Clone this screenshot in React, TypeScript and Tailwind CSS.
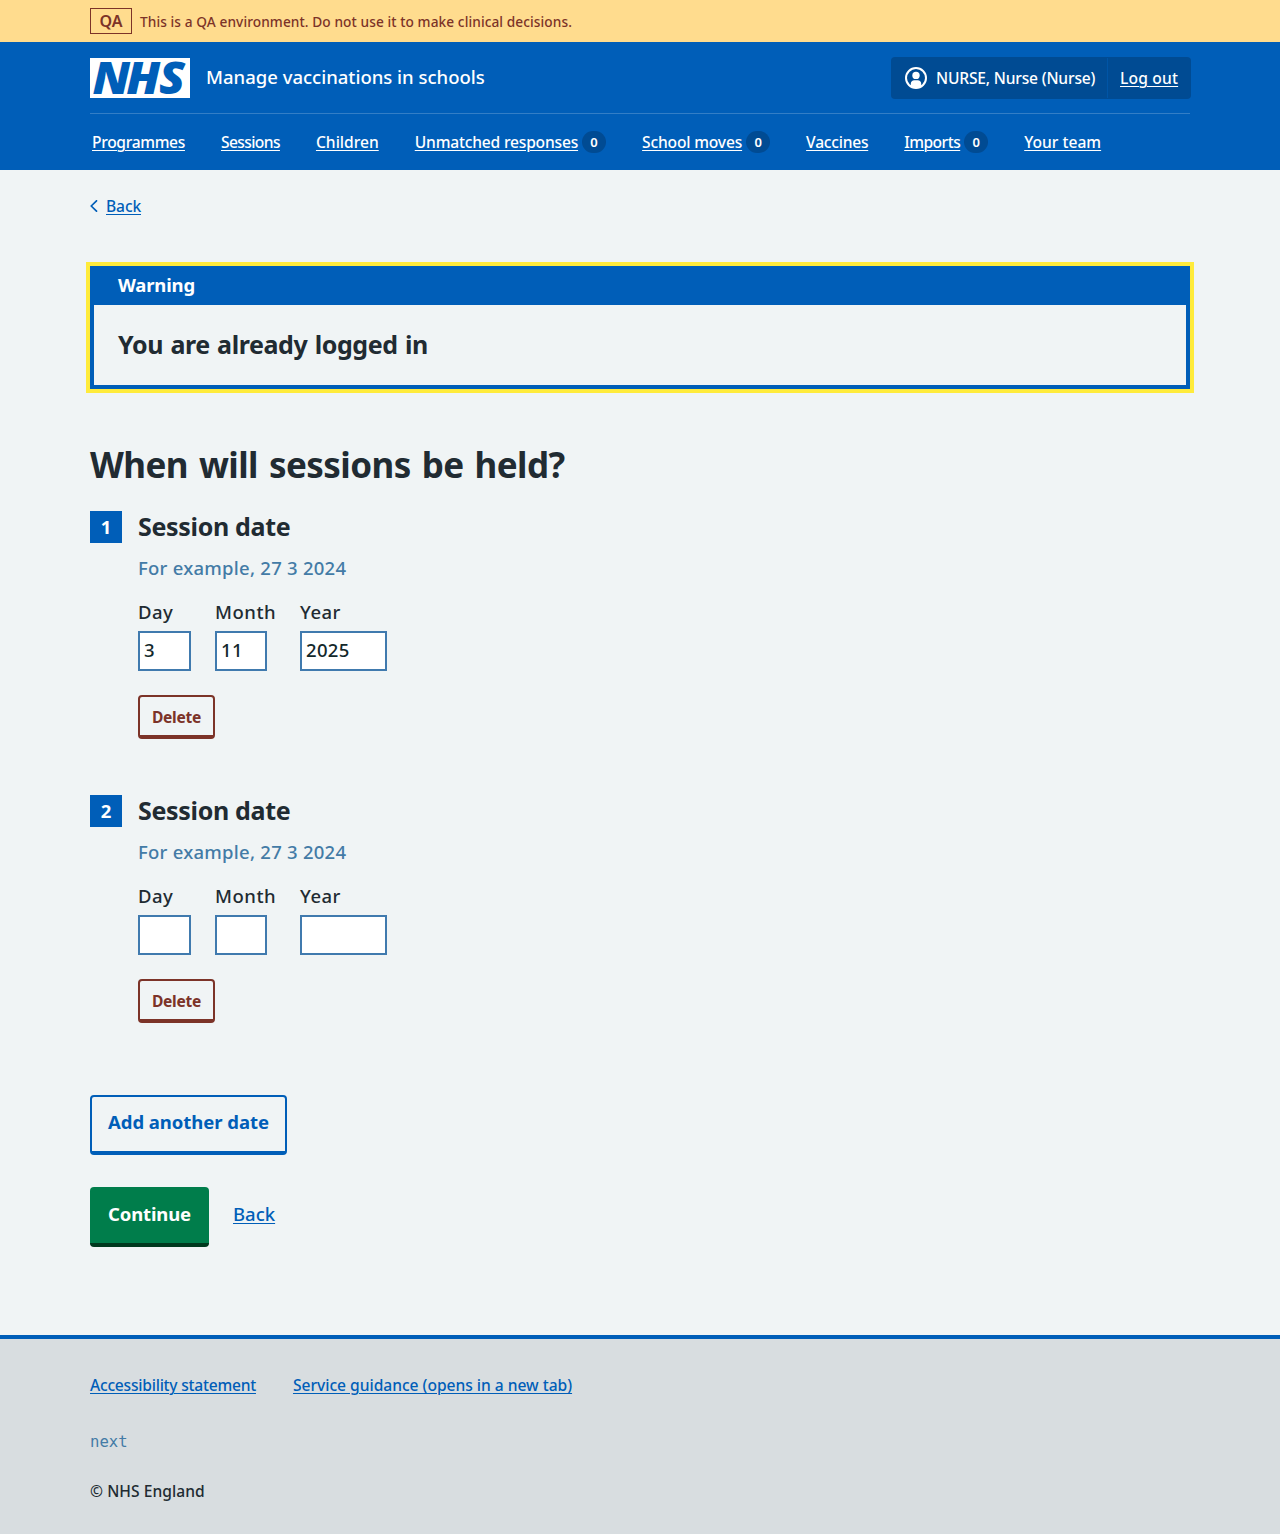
import { useState } from "react";

type NavItem = { label: string; tracking: string; count?: number };

const navItems: NavItem[] = [
  { label: "Programmes", tracking: "tracking-[-0.33px]" },
  { label: "Sessions", tracking: "tracking-[-0.6px]" },
  { label: "Children", tracking: "tracking-[0px]" },
  { label: "Unmatched responses", tracking: "tracking-[-0.19px]", count: 0 },
  { label: "School moves", tracking: "tracking-[-0.17px]", count: 0 },
  { label: "Vaccines", tracking: "tracking-[-0.24px]" },
  { label: "Imports", tracking: "tracking-[-0.52px]", count: 0 },
  { label: "Your team", tracking: "tracking-[0px]" },
];

const link = "underline decoration-1 underline-offset-2";

function Logo() {
  return (
    <svg width="100" height="40" viewBox="0 0 100 40" role="img" aria-label="NHS" className="shrink-0 overflow-visible">
      <rect width="100" height="40" fill="#fff" />
      <text
        transform="scale(1.07 1)"
        x="2.4 34 64.600"
        y="35.700"
        fill="#005eb8"
        fontFamily="Open Sans"
        fontSize="44.5"
        fontWeight="800"
        fontStyle="italic"
      >
        NHS
      </text>
    </svg>
  );
}

function AccountIcon() {
  return (
    <svg width="22" height="22" viewBox="0 0 22 22" aria-hidden="true" className="shrink-0">
      <circle cx="11" cy="11" r="10" fill="none" stroke="#fff" strokeWidth="2" />
      <circle cx="11" cy="8.4" r="3.7" fill="#fff" />
      <path d="M5.800 19.500v-2.700c0-2.200 1.500-3.600 3.600-3.600h3.200c2.100 0 3.600 1.400 3.600 3.600v2.700C14.800 20.500 13 21 11 21s-3.800-.5-5.200-1.500z" fill="#fff" />
    </svg>
  );
}

function Banner() {
  return (
    <div className="h-[42px] bg-[#ffdc8e] text-[#7c3328]">
      <div className="mx-auto flex h-full w-[1100px] items-center gap-2">
        <strong className="flex h-[26px] w-[42px] items-center justify-center border border-[#7c3328] text-base font-semibold leading-none">
          QA
        </strong>
        <span className="pt-px text-[13.7px] leading-5 tracking-[0.08px]">
          This is a QA environment. Do not use it to make clinical decisions.
        </span>
      </div>
    </div>
  );
}

function Header() {
  return (
    <header className="h-32 bg-[#005eb8] text-white">
      <div className="mx-auto w-[1100px]">
        <div className="flex h-[72px] items-center border-b border-[#337ec6]">
          <Logo />
          <span className="ml-4 pb-px text-[18.5px] leading-7">Manage vaccinations in schools</span>
          <div className="-mr-px ml-auto flex h-[42px] w-[300px] items-stretch rounded bg-[#004b93] py-px">
            <div className="flex w-[216px] items-center gap-[9px] whitespace-nowrap pl-3.5 tracking-[-0.18px]">
              <AccountIcon />
              NURSE, Nurse (Nurse)
            </div>
            <div className="flex flex-1 items-center border-l border-[#0055a6] pl-3">
              <a href="#" className={`${link} tracking-[0.18px]`}>Log out</a>
            </div>
          </div>
        </div>
        <nav className="flex h-14 items-center gap-9 pl-0.5">
          {navItems.map((item) => (
            <div key={item.label} className="flex items-center gap-1">
              <a href="#" className={`${link} ${item.tracking}`}>{item.label}</a>
              {item.count !== undefined && (
                <span className="flex h-[22px] w-6 items-center justify-center rounded-full bg-[#004b93] pt-px text-[13px] font-semibold leading-none">
                  {item.count}
                </span>
              )}
            </div>
          ))}
        </nav>
      </div>
    </header>
  );
}

function Field({ label, value, width, column }: { label: string; value: string; width: string; column: string }) {
  const [text, setText] = useState(value);
  return (
    <label className={`flex flex-col ${column}`}>
      <span className="text-[18.5px] leading-7 tracking-[0.5px]">{label}</span>
      <input
        value={text}
        onChange={(e) => setText(e.target.value)}
        className={`mt-[5px] h-10 border-2 border-[#407aae] bg-white px-1 pb-1 text-[18.5px] tracking-[0.3px] text-[#12282b] outline-none ${width}`}
      />
    </label>
  );
}

function SessionDate({ index, values }: { index: number; values: string[] }) {
  return (
    <section className="flex h-[284px] gap-4">
      <span className="flex h-8 w-8 items-center justify-center bg-[#005eb8] text-[18.5px] font-bold leading-none text-white">
        {index}
      </span>
      <div>
        <h2 className="-mt-px text-[25px] font-bold leading-8 tracking-[-0.33px]">Session date</h2>
        <p className="mt-3 text-[18.5px] leading-7 tracking-[0.25px] text-[#437ba6]">For example, 27 3 2024</p>
        <div className="mt-4 flex">
          <Field label="Day" value={values[0]} width="w-[53px]" column="w-[77px]" />
          <Field label="Month" value={values[1]} width="w-[52px]" column="w-[85px]" />
          <Field label="Year" value={values[2]} width="w-[87px]" column="w-[87px]" />
        </div>
        <button className="mt-6 h-11 w-[77px] rounded border-2 border-b-4 border-[#7c3328] pt-px text-[15.6px] font-bold leading-6 tracking-[-0.27px] text-[#7c3328]">
          Delete
        </button>
      </div>
    </section>
  );
}

export default function App() {
  return (
    <div className="flex min-h-[1534px] flex-col bg-[#f0f4f5] font-['Noto_Sans',sans-serif] text-[15.6px] font-medium leading-6 text-[#212b32]">
      <Banner />
      <Header />
      <main className="mx-auto w-[1100px] flex-1">
        <div className="flex h-24 items-start gap-2 pt-6">
          <svg width="8" height="12" viewBox="0 0 8 12" fill="none" stroke="#005eb8" strokeWidth="1.7" className="mt-1.5">
            <path d="M6.500 .8 1.200 6l5.300 5.200" strokeLinecap="round" strokeLinejoin="round" />
          </svg>
          <a href="#" className={`${link} tracking-[-0.12px] text-[#005eb8]`}>Back</a>
        </div>

        <div className="h-[123px] border-4 border-t-0 border-[#005eb8] outline-4 outline-[#ffeb3b]">
          <h2 className="h-[39px] bg-[#005eb8] pl-6 text-[18.5px] font-bold leading-[37px] tracking-[-0.17px] text-white">Warning</h2>
          <p className="pl-6 text-[25px] font-bold leading-[78px] tracking-[-0.4px] [word-spacing:1.2px]">You are already logged in</p>
        </div>

        <h1 className="mt-[52px] text-[35px] font-bold leading-[48px] tracking-[-0.56px] [word-spacing:2.4px]">When will sessions be held?</h1>

        <div className="mt-[22px]">
          <SessionDate index={1} values={["3", "11", "2025"]} />
          <SessionDate index={2} values={["", "", ""]} />
        </div>

        <button className="mt-4 block h-[60px] w-[197px] rounded border-2 border-b-4 border-[#005eb8] pb-1 text-[18.5px] font-bold leading-7 tracking-[-0.05px] text-[#005eb8]">
          Add another date
        </button>
        <div className="mt-8 flex">
          <button className="h-[60px] w-[119px] rounded border-b-4 border-[#00391e] bg-[#007d4b] pb-[3px] text-[18.5px] font-bold leading-7 tracking-[-0.14px] text-white">
            Continue
          </button>
          <a href="#" className={`${link} ml-6 mt-[13px] text-[18.5px] leading-7 text-[#005eb8]`}>Back</a>
        </div>
      </main>

      <footer className="h-[199px] border-t-4 border-[#005eb8] bg-[#d8dde0]">
        <div className="mx-auto w-[1100px] pt-[34px]">
          <div className="flex gap-[37px] text-[#005eb8]">
            <a href="#" className={`${link} tracking-[-0.23px]`}>Accessibility statement</a>
            <a href="#" className={`${link} tracking-[-0.02px]`}>Service guidance (opens in a new tab)</a>
          </div>
          <p className="mt-[33px] font-['DejaVu_Sans_Mono',monospace] font-normal text-[#437ba6]">next</p>
          <p className="mt-[25px] tracking-[0.05px]">© NHS England</p>
        </div>
      </footer>
    </div>
  );
}
